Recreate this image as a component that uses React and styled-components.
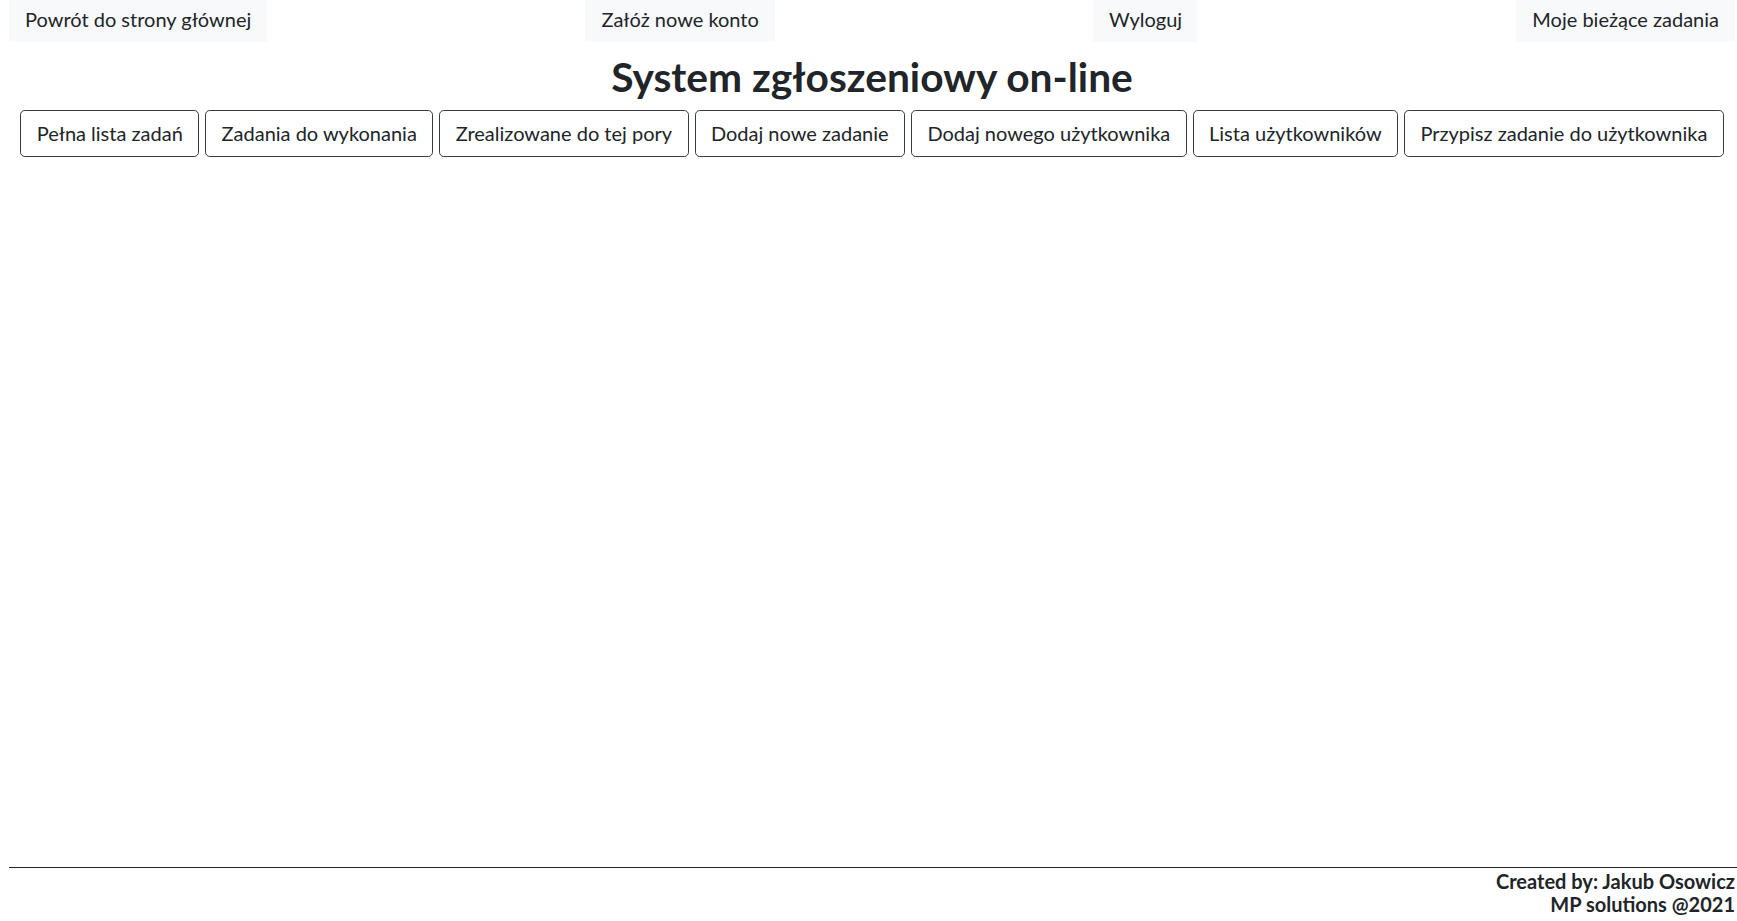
import React from "react";
import styled, { createGlobalStyle } from "styled-components";

const GlobalStyle = createGlobalStyle`
  html, body { margin: 0; padding: 0; background: #ffffff; }
  body {
    font-family: Lato, "Liberation Sans", sans-serif;
    color: #212529;
    overflow: hidden;
  }
  * { box-sizing: border-box; }
`;

const Page = styled.div`
  min-height: 100vh;
  display: flex;
  flex-direction: column;
  padding-left: 9px;
`;

const TopNav = styled.nav`
  display: flex;
  justify-content: space-between;
  align-items: flex-start;
  padding-right: 2px;
`;

const NavLink = styled.a`
  display: block;
  background: #f8f9fa;
  color: #212529;
  text-decoration: none;
  font-size: 20px;
  line-height: 30px;
  padding: 4px 16px 8px;
`;

const Main = styled.main`
  flex: 1;
  padding-right: 2px;
`;

const Title = styled.h1`
  margin: 11px 0 9px;
  text-align: center;
  font-size: 40.7px;
  line-height: 48px;
  font-weight: 700;
  color: #212529;
`;

const ButtonRow = styled.div`
  display: flex;
  justify-content: center;
  gap: 6px;
`;

const OutlineButton = styled.button`
  font-family: inherit;
  font-size: 20px;
  line-height: 29px;
  padding: 8px 15.4px;
  color: #212529;
  background: transparent;
  border: 1px solid #343a40;
  border-radius: 4.8px;
  cursor: pointer;
  white-space: nowrap;
`;

const Footer = styled.footer`
  padding-bottom: 5px;
`;

const Rule = styled.hr`
  margin: 0;
  border: 0;
  border-top: 1px solid #212529;
`;

const FooterText = styled.div`
  text-align: right;
  font-size: 20px;
  line-height: 23px;
  font-weight: 700;
  padding: 2px 2px 0 0;
  color: #212529;
`;

const navLinks = [
  "Powrót do strony głównej",
  "Załóż nowe konto",
  "Wyloguj",
  "Moje bieżące zadania",
];

const buttons = [
  "Pełna lista zadań",
  "Zadania do wykonania",
  "Zrealizowane do tej pory",
  "Dodaj nowe zadanie",
  "Dodaj nowego użytkownika",
  "Lista użytkowników",
  "Przypisz zadanie do użytkownika",
];

export default function App() {
  return (
    <>
      <GlobalStyle />
      <Page>
        <TopNav>
          {navLinks.map((l) => (
            <NavLink key={l} href="#">
              {l}
            </NavLink>
          ))}
        </TopNav>
        <Main>
          <Title>System zgłoszeniowy on-line</Title>
          <ButtonRow>
            {buttons.map((b) => (
              <OutlineButton key={b}>{b}</OutlineButton>
            ))}
          </ButtonRow>
        </Main>
        <Footer>
          <Rule />
          <FooterText>
            <div>Created by: Jakub Osowicz</div>
            <div>MP solutions @2021</div>
          </FooterText>
        </Footer>
      </Page>
    </>
  );
}
